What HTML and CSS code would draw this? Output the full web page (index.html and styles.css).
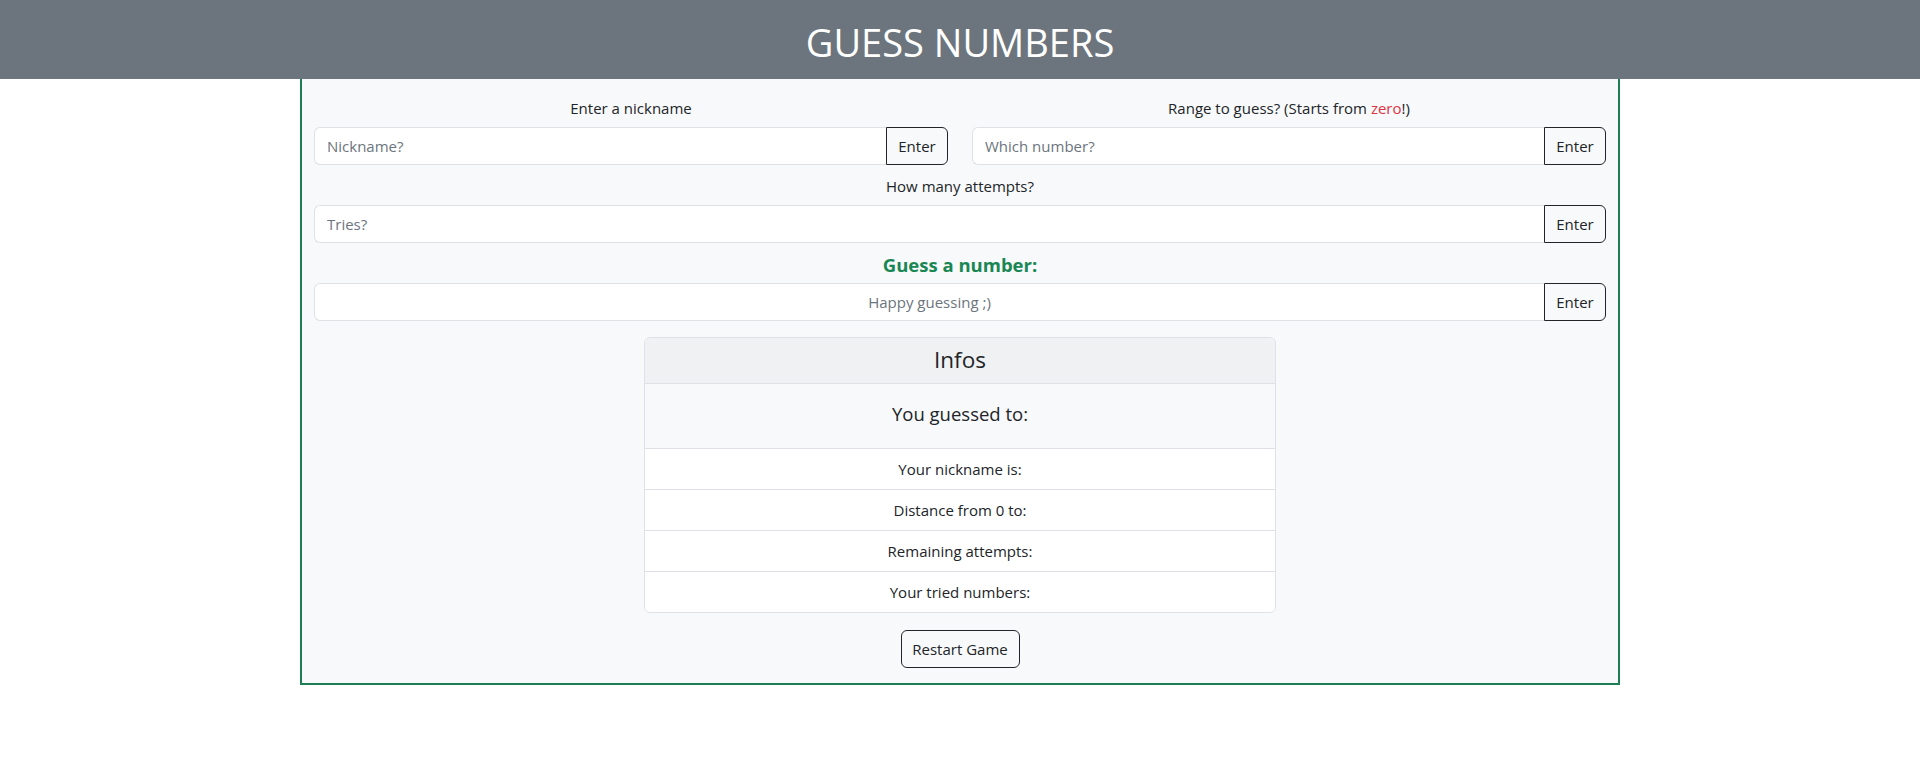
FILE: index.html
```html
<!DOCTYPE html>
<html lang="en">
<head>
<meta charset="utf-8">
<title>Guess Numbers</title>
<link rel="stylesheet" href="styles.css">
</head>
<body>
<header class="topbar">
  <h1 class="title">GUESS NUMBERS</h1>
</header>
<main class="game">
  <div class="row-two">
    <div class="field">
      <label class="field-label" for="nick">Enter a nickname</label>
      <div class="input-group">
        <input id="nick" class="input" type="text" placeholder="Nickname?">
        <button class="btn-enter" type="button">Enter</button>
      </div>
    </div>
    <div class="field">
      <label class="field-label" for="range">Range to guess? (Starts from <span class="zero">zero</span>!)</label>
      <div class="input-group">
        <input id="range" class="input" type="text" placeholder="Which number?">
        <button class="btn-enter" type="button">Enter</button>
      </div>
    </div>
  </div>
  <div class="field spaced">
    <label class="field-label" for="tries">How many attempts?</label>
    <div class="input-group">
      <input id="tries" class="input" type="text" placeholder="Tries?">
      <button class="btn-enter" type="button">Enter</button>
    </div>
  </div>
  <div class="field spaced">
    <label class="guess-label" for="guess">Guess a number:</label>
    <div class="input-group">
      <input id="guess" class="input input-center" type="text" placeholder="Happy guessing ;)">
      <button class="btn-enter" type="button">Enter</button>
    </div>
  </div>
  <section class="card">
    <div class="card-header">Infos</div>
    <div class="card-body">You guessed to:</div>
    <ul class="info-list">
      <li class="info-item">Your nickname is:</li>
      <li class="info-item">Distance from 0 to:</li>
      <li class="info-item">Remaining attempts:</li>
      <li class="info-item">Your tried numbers:</li>
    </ul>
  </section>
  <div class="actions">
    <button class="btn-restart" type="button">Restart Game</button>
  </div>
</main>
</body>
</html>
```

FILE: styles.css
```css
* { box-sizing: border-box; }

html, body {
  margin: 0;
  padding: 0;
  background: #ffffff;
  color: #212529;
  font-family: "Open Sans", "Noto Sans", sans-serif;
  font-size: 15px;
}

.topbar {
  height: 79px;
  background: #6c757d;
  display: flex;
  align-items: center;
  justify-content: center;
}

.title {
  margin: 0;
  padding-top: 4px;
  color: #ffffff;
  font-weight: 400;
  font-size: 38px;
  line-height: 44px;
  letter-spacing: 0;
}

.game {
  width: 1320px;
  margin: 0 auto;
  background: #f8f9fa;
  border: 2px solid #1f7d55;
  border-top: 0;
  padding: 18px 12px 15px;
}

.row-two {
  display: grid;
  grid-template-columns: 1fr 1fr;
  column-gap: 24px;
}

.field {
  display: flex;
  flex-direction: column;
}

.spaced { margin-top: 10px; }

.field-label {
  display: block;
  text-align: center;
  line-height: 22px;
  height: 24px;
  margin-bottom: 6px;
}

.zero { color: #dc3545; }

.guess-label {
  display: block;
  text-align: center;
  color: #198754;
  font-weight: 700;
  font-size: 18.5px;
  line-height: 23px;
  height: 24px;
  margin-bottom: 6px;
}

.input-group {
  display: flex;
  height: 38px;
}

.input {
  flex: 1;
  min-width: 0;
  height: 38px;
  border: 1px solid #dee2e6;
  border-right: 0;
  border-radius: 6px 0 0 6px;
  background: #ffffff;
  padding: 6px 12px;
  font-family: inherit;
  font-size: 15px;
  color: #212529;
  outline: none;
}

.input::placeholder { color: #6c757d; opacity: 1; }

.input-center { text-align: center; }

.btn-enter {
  width: 62px;
  height: 38px;
  border: 1px solid #212529;
  border-radius: 0 6px 6px 0;
  background: transparent;
  color: #212529;
  font-family: inherit;
  font-size: 15px;
  padding: 0;
  cursor: pointer;
}

.card {
  width: 632px;
  margin: 16px auto 0;
  border: 1px solid #dee2e6;
  border-radius: 6px;
  overflow: hidden;
  background: #ffffff;
}

.card-header {
  height: 46px;
  background: #f0f1f2;
  border-bottom: 1px solid #dee2e6;
  text-align: center;
  font-size: 22.5px;
  line-height: 44px;
}

.card-body {
  height: 65px;
  background: #f8f9fa;
  border-bottom: 1px solid #dee2e6;
  text-align: center;
  font-size: 18.5px;
  line-height: 24px;
  padding-top: 18px;
}

.info-list {
  list-style: none;
  margin: 0;
  padding: 0;
}

.info-item {
  height: 41px;
  line-height: 40px;
  text-align: center;
  border-bottom: 1px solid #dee2e6;
  background: #ffffff;
}

.info-item:last-child {
  border-bottom: 0;
  height: 40px;
}

.actions {
  display: flex;
  justify-content: center;
  margin-top: 17px;
}

.btn-restart {
  width: 119px;
  height: 38px;
  border: 1px solid #212529;
  border-radius: 6px;
  background: transparent;
  color: #212529;
  font-family: inherit;
  font-size: 15px;
  padding: 0;
  cursor: pointer;
}
```
